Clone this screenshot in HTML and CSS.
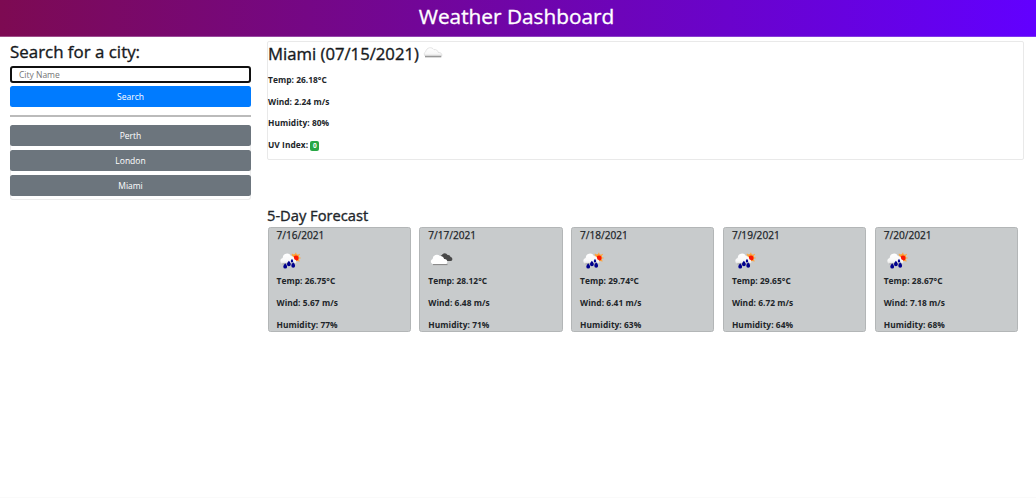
FILE: index.html
```html
<!DOCTYPE html>
<html lang="en">
<head>
<meta charset="utf-8">
<title>Weather Dashboard</title>
<link rel="stylesheet" href="styles.css">
</head>
<body>
<svg class="defs" width="0" height="0" aria-hidden="true">
  <defs>
    <linearGradient id="cloud" x1="0" y1="0" x2="0" y2="1">
      <stop offset="0" stop-color="#fff"/><stop offset=".7" stop-color="#f8f8f8"/><stop offset="1" stop-color="#ddd"/>
    </linearGradient>
    <symbol id="rain" viewBox="0 0 27 27">
      <g stroke="#ffa640" stroke-width="1.2"><path d="M18.8 5.8v2M14.8 6.8l1.5 1.5M22.6 7.2l-1.5 1.5M23.6 11h-2M22.4 14.4l-1.5-1.5"/></g>
      <circle cx="18.4" cy="10.8" r="3.7" fill="#ffa030"/>
      <circle cx="19" cy="11" r="2.5" fill="#fa1703"/>
      <path d="M5.6 17a3.1 3.1 0 0 1 0-6 4.4 4.4 0 0 1 8.3-2 3.4 3.4 0 0 1 3.4 3.2 2.6 2.6 0 0 1 .8 4.8z" fill="url(#cloud)"/>
      <path d="M5.4 16.9h12.8" stroke="#888" stroke-width=".8"/>
      <g fill="#00008e"><path id="drop" d="M8.2 16.2c1.1 1.6 1.9 2.2 1.9 3.5a1.9 1.9 0 0 1-3.8 0c0-1.3.8-1.9 1.9-3.5z"/><use href="#drop" x="3.7" y="-2.4"/><use href="#drop" x="8" y="-.9"/><path d="M15 11.8c.7 1.3 1.2 1.6 1.2 2.4a1.2 1.2 0 0 1-2.4 0c0-.8.5-1.1 1.2-2.4z"/></g>
    </symbol>
    <symbol id="broken" viewBox="0 0 27 27">
      <path d="M12.5 10.3a2.2 2.2 0 0 1 1.3-2.4 3.4 3.4 0 0 1 5.8.2 2.7 2.7 0 0 1 3 2 2 2 0 0 1 .6 3.8h-5z" fill="#484848"/>
      <path d="M4.6 17.1a2.8 2.8 0 0 1 0-5.2 4.2 4.2 0 0 1 7.3-2.8 3.5 3.5 0 0 1 4.2 3c3-.3 4.3 3 2.2 5z" fill="#fff"/>
      <path d="M5 17.6h14.5" stroke="#858585" stroke-width="1"/>
    </symbol>
    <symbol id="overcast" viewBox="0 0 27 27">
      <path d="M5.4 16.2a2.6 2.6 0 0 1 .3-4.5c.7-4.2 5.9-5.4 8.3-2a3.3 3.3 0 0 1 4.2 2.8c3.2-.2 4.7 2.2 3 3.7z" fill="url(#cloud)" stroke="#d8d8d8" stroke-width=".7"/>
      <path d="M5 16.6h16.3" stroke="#999" stroke-width="1.5"/>
    </symbol>
  </defs>
</svg>
<header class="banner"><h1>Weather Dashboard</h1></header>
<main class="layout">
  <aside class="search">
    <h2>Search for a city:</h2>
    <input class="city" type="text" placeholder="City Name">
    <button class="btn primary">Search</button>
    <hr>
    <div class="history">
      <button class="btn">Perth</button>
      <button class="btn">London</button>
      <button class="btn">Miami</button>
    </div>
  </aside>
  <section class="results">
    <article class="today">
      <h2><span>Miami (07/15/2021)</span><svg class="icon"><use href="#overcast"/></svg></h2>
      <p>Temp: 26.18°C</p>
      <p>Wind: 2.24 m/s</p>
      <p>Humidity: 80%</p>
      <p>UV Index: <span class="badge">0</span></p>
    </article>
    <h3>5-Day Forecast</h3>
    <div class="forecast">
      <article class="day"><h4>7/16/2021</h4><svg class="icon"><use href="#rain"/></svg><p>Temp: 26.75°C</p><p>Wind: 5.67 m/s</p><p>Humidity: 77%</p></article>
      <article class="day"><h4>7/17/2021</h4><svg class="icon"><use href="#broken"/></svg><p>Temp: 28.12°C</p><p>Wind: 6.48 m/s</p><p>Humidity: 71%</p></article>
      <article class="day"><h4>7/18/2021</h4><svg class="icon"><use href="#rain"/></svg><p>Temp: 29.74°C</p><p>Wind: 6.41 m/s</p><p>Humidity: 63%</p></article>
      <article class="day"><h4>7/19/2021</h4><svg class="icon"><use href="#rain"/></svg><p>Temp: 29.65°C</p><p>Wind: 6.72 m/s</p><p>Humidity: 64%</p></article>
      <article class="day"><h4>7/20/2021</h4><svg class="icon"><use href="#rain"/></svg><p>Temp: 28.67°C</p><p>Wind: 7.18 m/s</p><p>Humidity: 68%</p></article>
    </div>
  </section>
</main>
</body>
</html>
```
FILE: styles.css
```css
* { box-sizing: border-box; }
body { margin: 0; height: 498px; overflow: hidden; background: #fff; border-bottom: 1px solid #fafafa; color: #212529; font-family: "Open Sans", "Noto Sans", sans-serif; font-size: 8.5px; line-height: 13px; }
h1, h2, h3, h4, p { margin: 0; font-weight: 500; white-space: nowrap; }
h1, h2, h3 { -webkit-text-stroke: .35px currentColor; }
h4 { -webkit-text-stroke: .25px currentColor; }
.defs { display: block; }
.banner { height: 37px; padding-top: 4px; background: linear-gradient(90deg, #7d0a52, #6200ff); border-bottom: 1px solid #8730b8; border-image: linear-gradient(90deg, #a04f87, #7c36f2) 1; text-align: center; color: #fff; }
h1 { font-size: 20.8px; line-height: 25px; margin-left: -3px; }
.layout { display: flex; gap: 16px; padding: 0 12px 0 10px; }
.search { width: 241px; padding-top: 4px; }
h2 { font-size: 17px; line-height: 21px; color: #16191c; }
.search h2 { font-size: 16.9px; }
.city { display: block; width: 241px; height: 17px; margin-top: 4px; padding: 0 7px 1px; border: 2px solid #101010; border-radius: 3px; font: inherit; background: #fff; }
.city::placeholder { color: #757575; }
.btn { display: block; width: 100%; height: 21px; padding: 0; border: 0; border-radius: 2.5px; background: #6c757d; color: #fff; font: inherit; text-align: center; }
.primary { margin-top: 3px; background: #007bff; }
hr { height: 2px; margin: 8px 0; border: 0; background: #bbb; }
.history { display: flex; flex-direction: column; gap: 4px; padding-bottom: 3px; border: 1px solid #ececec; border-top: 0; border-radius: 3px; }
.history .btn { width: 241px; margin-left: -1px; }
.results { flex: 1; padding-top: 4px; }
.today { height: 119px; border: 1px solid #e9e9e9; border-radius: 2px; font-weight: 700; }
.today h2 { display: flex; align-items: center; height: 23px; margin-bottom: 8px; font-size: 16.7px; padding-bottom: 1px; }
.today h2 .icon { margin-left: 1px; }
.icon { display: block; width: 27px; height: 27px; }
p { height: 13px; margin-bottom: 8.7px; font-size: 8.4px; font-weight: 700; letter-spacing: .04px; }
.badge { display: inline-block; width: 9px; height: 10px; border-radius: 2px; background: #28a745; color: #fff; font-size: 6.5px; line-height: 10px; text-align: center; vertical-align: 0.5px; }
h3 { margin-top: 46px; font-size: 14.7px; line-height: 19px; }
.forecast { display: grid; grid-template-columns: repeat(5, 143.3px); gap: 8.5px; padding-left: .5px; margin-top: 2px; }
.day { height: 105px; padding: 1px 8px 0; border: 1px solid #b3b6b7; border-radius: 2.5px; background: #c8cbcc; overflow: hidden; }
h4 { height: 18px; font-size: 10.1px; line-height: 13px; }
.day .icon { margin-bottom: .4px; }
```
